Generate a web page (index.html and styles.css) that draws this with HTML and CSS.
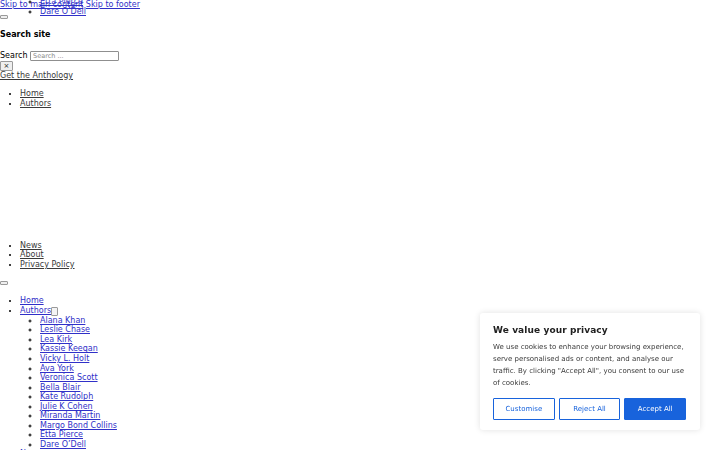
FILE: index.html
```html
<!DOCTYPE html>
<html lang="en">
<head>
<meta charset="utf-8">
<title>Anthology</title>
<link rel="stylesheet" href="styles.css">
</head>
<body>
<ul class="ghost-sub">
  <li><a href="#">Etta Pierce</a></li>
  <li><a href="#">Dare O’Dell</a></li>
</ul>
<div class="skip"><a href="#main">Skip to main content</a> <a href="#footer">Skip to footer</a></div>
<button class="tiny" type="button"></button>
<h2 class="search-title">Search site</h2>
<form class="search">
  <label for="s">Search</label> <input id="s" type="search" placeholder="Search ...">
  <button class="close" type="button">×</button>
</form>
<a class="dark" href="#">Get the Anthology</a>
<ul class="menu dark-list">
  <li><a href="#">Home</a></li>
  <li><a href="#">Authors</a></li>
</ul>
<div class="spacer"></div>
<ul class="menu dark-list">
  <li><a href="#">News</a></li>
  <li><a href="#">About</a></li>
  <li><a href="#">Privacy Policy</a></li>
</ul>
<button class="tiny tiny-2" type="button"></button>
<ul class="menu menu-main">
  <li><a href="#">Home</a></li>
  <li><a href="#">Authors</a><button class="sub-toggle" type="button"></button>
    <ul class="sub">
      <li><a href="#">Alana Khan</a></li>
      <li><a href="#">Leslie Chase</a></li>
      <li><a href="#">Lea Kirk</a></li>
      <li><a href="#">Kassie Keegan</a></li>
      <li><a href="#">Vicky L. Holt</a></li>
      <li><a href="#">Ava York</a></li>
      <li><a href="#">Veronica Scott</a></li>
      <li><a href="#">Bella Blair</a></li>
      <li><a href="#">Kate Rudolph</a></li>
      <li><a href="#">Julie K Cohen</a></li>
      <li><a href="#">Miranda Martin</a></li>
      <li><a href="#">Margo Bond Collins</a></li>
      <li><a href="#">Etta Pierce</a></li>
      <li><a href="#">Dare O’Dell</a></li>
    </ul>
  </li>
  <li><a href="#">News</a></li>
</ul>

<div class="cookie">
  <p class="cookie-title">We value your privacy</p>
  <p class="cookie-text">We use cookies to enhance your browsing experience, serve personalised ads or content, and analyse our traffic. By clicking "Accept All", you consent to our use of cookies.</p>
  <div class="cookie-actions">
    <button class="cbtn" type="button">Customise</button>
    <button class="cbtn" type="button">Reject All</button>
    <button class="cbtn primary" type="button">Accept All</button>
  </div>
</div>
</body>
</html>
```

FILE: styles.css
```css
html, body {
  margin: 0;
  padding: 0;
  background: #ffffff;
}
body {
  font-family: "DejaVu Sans", sans-serif;
  font-size: 8px;
  line-height: 9.55px;
  color: #000;
  position: relative;
}
a {
  color: #3030c8;
}
.skip {
  height: 9.5px;
}
.ghost-sub {
  position: absolute;
  top: -3px;
  left: 20px;
  margin: 0;
  padding-left: 20px;
  list-style: circle;
}
.tiny {
  display: block;
  width: 8px;
  height: 4px;
  padding: 0;
  margin: 5px 0 0;
  border: 1px solid #9a9a9a;
  border-radius: 1px;
  background: #efefef;
}
.tiny-2 {
  margin-top: 11.5px;
}
.search-title {
  font-size: 8px;
  font-weight: bold;
  line-height: 9.5px;
  margin: 11.5px 0 0;
}
.search {
  margin: 11px 0 0;
  line-height: 10px;
}
.search label {
  vertical-align: middle;
}
.search input {
  box-sizing: border-box;
  width: 89px;
  height: 10px;
  margin: 0;
  padding: 0 2px;
  border: 1px solid #8f8f8f;
  border-radius: 1px;
  font-family: "DejaVu Sans", sans-serif;
  font-size: 6.5px;
  vertical-align: middle;
}
.search input::placeholder {
  color: #8a8a8a;
}
.close {
  display: block;
  box-sizing: border-box;
  width: 13px;
  height: 10px;
  margin: 0;
  padding: 0;
  border: 1px solid #9a9a9a;
  border-radius: 1px;
  background: #efefef;
  font-family: "DejaVu Sans", sans-serif;
  font-size: 7px;
  line-height: 8px;
  color: #222;
}
.dark, .dark-list a {
  color: #3a3a3a;
}
.menu {
  margin: 8.5px 0;
  padding-left: 20px;
}
.menu-main {
  margin-top: 11.5px;
}
.spacer {
  height: 115.5px;
}
.sub {
  margin: 0;
  padding-left: 20px;
  list-style: circle;
}
.sub-toggle {
  box-sizing: border-box;
  width: 7px;
  height: 9px;
  padding: 0;
  margin: 0;
  border: 1px solid #9a9a9a;
  border-radius: 1px;
  background: #f4f4f4;
  vertical-align: -2px;
}

/* cookie banner */
.cookie {
  position: fixed;
  right: 20px;
  bottom: 20px;
  width: 220px;
  box-sizing: border-box;
  padding: 12px 14px 10px 13px;
  background: #ffffff;
  border-radius: 3px;
  box-shadow: 0 0 6px rgba(0, 0, 0, 0.12);
  font-family: "DejaVu Sans", sans-serif;
}
.cookie-title {
  margin: 0 0 6px;
  font-size: 9px;
  line-height: 10px;
  font-weight: bold;
  color: #212121;
  letter-spacing: 0.1px;
}
.cookie-text {
  margin: 0 0 9px;
  font-size: 7px;
  line-height: 12px;
  color: #3a3a3a;
}
.cookie-actions {
  display: flex;
  gap: 4px;
}
.cbtn {
  flex: 1;
  box-sizing: border-box;
  height: 22px;
  padding: 0;
  border: 1px solid #1863dc;
  border-radius: 1px;
  background: #ffffff;
  color: #1863dc;
  font-family: "DejaVu Sans", sans-serif;
  font-size: 7px;
}
.cbtn.primary {
  background: #1863dc;
  color: #ffffff;
}
```
